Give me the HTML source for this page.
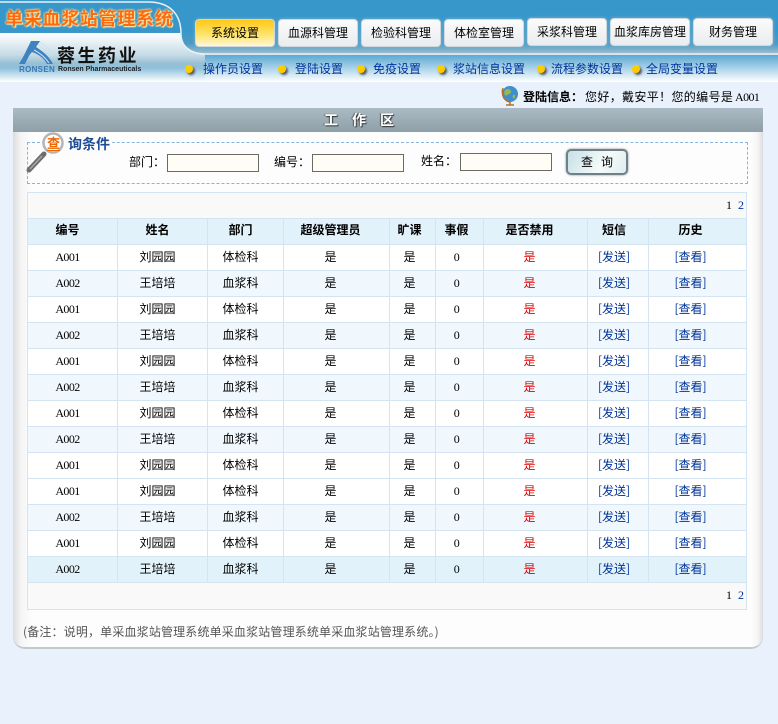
<!DOCTYPE html>
<html lang="zh"><head><meta charset="utf-8"><title>单采血浆站管理系统</title>
<style>
html,body{margin:0;padding:0}
body{width:778px;height:724px;position:relative;overflow:hidden;background:#e9f2fc;font:12px/16px "WenQuanYi Zen Hei","Noto Sans CJK SC",sans-serif;color:#000}
.a{position:absolute;white-space:nowrap}
.tab{position:absolute;width:78px;height:26px;line-height:26px;text-align:center;background:linear-gradient(#fbfbfb,#eaecef);border:1px solid #ced8de;border-radius:4px;box-shadow:0 0 3px #7fb4d0}
.on{background:linear-gradient(#ffc819,#ffe36a 55%,#fff7d6)}
.n{position:absolute;top:61px;color:#003399;white-space:nowrap}
.d{position:absolute;top:65px;width:8px;height:8px;border-radius:50%;background:#ffcc00;box-shadow:2px 2px 2px #556}
.ip{position:absolute;width:90px;height:16px;border:1px solid #6b6b63;background:#fffdf5}
table{position:absolute;left:27px;top:218px;width:719px;border-collapse:collapse;table-layout:fixed}
td,th{padding:0;border:1px solid #d5e4f2;text-align:center;font-size:12px;font-weight:normal}
td{height:23px;padding-bottom:2px;background:#fff}
th{height:21px;padding-bottom:4px;font-weight:bold;background:#e2f2fa}
td:nth-child(1),th:nth-child(1),td:nth-child(2),th:nth-child(2),td:nth-child(3),th:nth-child(3){padding-right:10px}
td:nth-child(4),th:nth-child(4),td:nth-child(7),th:nth-child(7){padding-right:12px}
td:nth-child(5),th:nth-child(5),td:nth-child(6),th:nth-child(6){padding-right:6px}
td:nth-child(8),th:nth-child(8){padding-right:8px}
td:nth-child(9),th:nth-child(9){padding-right:14px}
tr.t td{background:#f0f8fd}
tr.l td{background:#e2f2fa}
.e{font-family:"Liberation Serif",serif;letter-spacing:-.6px}
.r{color:#e00000}.b{color:#003399}
.pg{font-family:"Liberation Serif",serif;word-spacing:3px}
</style></head><body>
<svg class="a" style="left:0;top:0" width="778" height="82">
<defs>
<linearGradient id="g1" x1="0" y1="0" x2="0" y2="1"><stop offset="0" stop-color="#fff"/><stop offset=".45" stop-color="#c5dbe5"/><stop offset=".62" stop-color="#98bfd3"/><stop offset=".72" stop-color="#8fc1dd"/><stop offset="1" stop-color="#fff"/></linearGradient>
<linearGradient id="g2" x1="0" y1="0" x2="0" y2="1"><stop offset="0" stop-color="#3797ca"/><stop offset=".55" stop-color="#4d9bc4"/><stop offset="1" stop-color="#a9c3d0"/></linearGradient>
<linearGradient id="g3" x1="0" y1="0" x2="0" y2="1"><stop offset="0" stop-color="#5aa8d4"/><stop offset="1" stop-color="#fff"/></linearGradient>
</defs>
<rect width="778" height="33" fill="#3797ca"/>
<rect y="30" width="778" height="25" fill="url(#g2)"/>
<rect y="55" width="778" height="27" fill="url(#g3)"/>
<path d="M0 33H181C181 46 190 54 205 54V82H0Z" fill="url(#g1)"/>
<path d="M0 2H148C170 2 181 14 181 34C181 46 190 54 205 54H778" fill="none" stroke="#e6f2f8" stroke-width="1.5"/>
</svg>
<div class="a" style="left:5px;top:7px;font-size:18px;line-height:22px;font-weight:bold;letter-spacing:.7px;color:#ff6a10;text-shadow:0 0 2px #ffe9a0,0 0 2px #ffe9a0,1px 1px 1px #fff0c0">单采血浆站管理系统</div>
<svg class="a" style="left:18px;top:41px" width="35" height="23" viewBox="0 0 35 23"><path d="M1 23C6 15 9 8 13 0H22L18 6C24 10 31 15 35 23H29C26 17 20 13 14 11C11 14 9 19 7 23Z" fill="#3f82c0"/><path d="M20 3C25 7 30 11 34 15M22 1C27 4 31 8 34 11M16 9C22 12 27 16 31 22" stroke="#cfe2ee" fill="none"/></svg>
<div class="a" style="left:19px;top:65px;font:bold 8px/9px 'Liberation Sans',sans-serif;color:#3a78b4;letter-spacing:.3px">RONSEN</div>
<div class="a" style="left:57px;top:45px;font-size:18px;line-height:20px;font-weight:bold;letter-spacing:2.5px;color:#111">蓉生药业</div>
<div class="a" style="left:58px;top:65px;font:bold 7px/9px 'Liberation Sans',sans-serif;color:#222">Ronsen Pharmaceuticals</div>

<div class="tab on" style="left:195px;top:19px">系统设置</div>
<div class="tab" style="left:278px;top:19px">血源科管理</div>
<div class="tab" style="left:361px;top:19px">检验科管理</div>
<div class="tab" style="left:444px;top:19px">体检室管理</div>
<div class="tab" style="left:527px;top:18px">采浆科管理</div>
<div class="tab" style="left:610px;top:18px">血浆库房管理</div>
<div class="tab" style="left:693px;top:18px">财务管理</div>

<i class="d" style="left:185px"></i><span class="n" style="left:203px">操作员设置</span>
<i class="d" style="left:278px"></i><span class="n" style="left:295px">登陆设置</span>
<i class="d" style="left:357px"></i><span class="n" style="left:373px">免疫设置</span>
<i class="d" style="left:437px"></i><span class="n" style="left:453px">浆站信息设置</span>
<i class="d" style="left:537px"></i><span class="n" style="left:551px">流程参数设置</span>
<i class="d" style="left:632px"></i><span class="n" style="left:646px">全局变量设置</span>

<svg class="a" style="left:501px;top:85px" width="18" height="22" viewBox="0 0 18 22"><circle cx="9" cy="9" r="8" fill="#3d8fd0"/><path d="M4 5C7 3 10 4 10 7C9 10 6 9 5 11C3 10 3 7 4 5ZM12 10C14 9 15 11 13 14C12 13 11 12 12 10Z" fill="#9cb84a"/><path d="M2 3C0 9 3 16 9 17V20M5 20H13" stroke="#b5702a" stroke-width="1.5" fill="none"/></svg>
<div class="a" style="left:523px;top:89px"><b>登陆信息：</b></div>
<div class="a" style="left:585px;top:89px;letter-spacing:.35px">您好，戴安平！您的编号是</div>
<div class="a e" style="left:735px;top:89px">A001</div>

<div class="a" style="left:13px;top:108px;width:750px;height:541px;background:linear-gradient(90deg,#dcdcdc,#f5f5f5 8px,#fdfdfd 20px,#fdfdfd 738px,#f4f4f4 745px,#dcdcdc);border-radius:0 0 12px 12px;border-bottom:2px solid #c4c9cd;box-sizing:border-box"></div>
<div class="a" style="left:13px;top:108px;width:750px;height:24px;background:linear-gradient(#aabbc5,#8e9fa7)"></div>
<div class="a" style="left:324px;top:108px;font-size:14px;line-height:24px;font-weight:bold;color:#fff;text-shadow:1px 1px 1px #333,-1px 0 1px #555;letter-spacing:14px">工作区</div>

<div class="a" style="left:27px;top:142px;width:719px;height:40px;border:1px dashed #85b4e0"></div>
<div class="a" style="left:62px;top:134px;width:50px;height:20px;background:#fcfcfc"></div>
<svg class="a" style="left:25px;top:131px" width="44" height="44" viewBox="0 0 44 44"><path d="M4 39L19 23" stroke="#6d6d6d" stroke-width="5" stroke-linecap="round"/><path d="M5 38L17 25" stroke="#a5a5a5" stroke-width="1.5"/><circle cx="28" cy="12" r="9.5" fill="#fff" stroke="#b5b5b5" stroke-width="2.5"/></svg>
<div class="a" style="left:47px;top:136px;font-size:13px;line-height:14px;font-weight:bold;color:#ee6600;border-bottom:1px solid #ee6600">查</div>
<div class="a" style="left:68px;top:136px;font-size:14px;line-height:16px;font-weight:bold;color:#1e4d96">询条件</div>
<div class="a" style="left:129px;top:154px">部门：</div><div class="ip" style="left:167px;top:154px"></div>
<div class="a" style="left:274px;top:154px">编号：</div><div class="ip" style="left:312px;top:154px"></div>
<div class="a" style="left:421px;top:153px">姓名：</div><div class="ip" style="left:460px;top:153px"></div>
<div class="a" style="left:566px;top:149px;width:58px;height:22px;border:2px solid #6f8086;border-radius:5px;background:linear-gradient(120deg,#c6e0e6,#f6fbfb 60%,#dfecee);text-align:center;line-height:22px;box-shadow:0 0 2px #889">查&nbsp;&nbsp;&nbsp;询</div>

<div class="a pg" style="left:27px;top:192px;width:716px;height:26px;background:#f9f9f9;border:1px solid #d5e4f2;border-bottom:0;line-height:25px;text-align:right;padding-right:2px">1 <span class="b">2</span></div>
<table><colgroup><col style="width:90px"><col style="width:90px"><col style="width:76px"><col style="width:106px"><col style="width:46px"><col style="width:48px"><col style="width:104px"><col style="width:61px"><col style="width:98px"></colgroup>
<tbody>
<tr><th>编号</th><th>姓名</th><th>部门</th><th>超级管理员</th><th>旷课</th><th>事假</th><th>是否禁用</th><th>短信</th><th>历史</th></tr>
<tr><td class="e">A001</td><td>刘园园</td><td>体检科</td><td>是</td><td>是</td><td class="e">0</td><td class="r">是</td><td class="b">[发送]</td><td class="b">[查看]</td></tr>
<tr class="t"><td class="e">A002</td><td>王培培</td><td>血浆科</td><td>是</td><td>是</td><td class="e">0</td><td class="r">是</td><td class="b">[发送]</td><td class="b">[查看]</td></tr>
<tr><td class="e">A001</td><td>刘园园</td><td>体检科</td><td>是</td><td>是</td><td class="e">0</td><td class="r">是</td><td class="b">[发送]</td><td class="b">[查看]</td></tr>
<tr class="t"><td class="e">A002</td><td>王培培</td><td>血浆科</td><td>是</td><td>是</td><td class="e">0</td><td class="r">是</td><td class="b">[发送]</td><td class="b">[查看]</td></tr>
<tr><td class="e">A001</td><td>刘园园</td><td>体检科</td><td>是</td><td>是</td><td class="e">0</td><td class="r">是</td><td class="b">[发送]</td><td class="b">[查看]</td></tr>
<tr class="t"><td class="e">A002</td><td>王培培</td><td>血浆科</td><td>是</td><td>是</td><td class="e">0</td><td class="r">是</td><td class="b">[发送]</td><td class="b">[查看]</td></tr>
<tr><td class="e">A001</td><td>刘园园</td><td>体检科</td><td>是</td><td>是</td><td class="e">0</td><td class="r">是</td><td class="b">[发送]</td><td class="b">[查看]</td></tr>
<tr class="t"><td class="e">A002</td><td>王培培</td><td>血浆科</td><td>是</td><td>是</td><td class="e">0</td><td class="r">是</td><td class="b">[发送]</td><td class="b">[查看]</td></tr>
<tr><td class="e">A001</td><td>刘园园</td><td>体检科</td><td>是</td><td>是</td><td class="e">0</td><td class="r">是</td><td class="b">[发送]</td><td class="b">[查看]</td></tr>
<tr><td class="e">A001</td><td>刘园园</td><td>体检科</td><td>是</td><td>是</td><td class="e">0</td><td class="r">是</td><td class="b">[发送]</td><td class="b">[查看]</td></tr>
<tr class="t"><td class="e">A002</td><td>王培培</td><td>血浆科</td><td>是</td><td>是</td><td class="e">0</td><td class="r">是</td><td class="b">[发送]</td><td class="b">[查看]</td></tr>
<tr><td class="e">A001</td><td>刘园园</td><td>体检科</td><td>是</td><td>是</td><td class="e">0</td><td class="r">是</td><td class="b">[发送]</td><td class="b">[查看]</td></tr>
<tr class="l"><td class="e">A002</td><td>王培培</td><td>血浆科</td><td>是</td><td>是</td><td class="e">0</td><td class="r">是</td><td class="b">[发送]</td><td class="b">[查看]</td></tr>
</tbody></table>
<div class="a pg" style="left:27px;top:583px;width:716px;height:26px;background:#f9f9f9;border:1px solid #d5e4f2;border-top:0;line-height:24px;text-align:right;padding-right:2px">1 <span class="b">2</span></div>
<div class="a" style="left:23px;top:624px;color:#555;letter-spacing:.16px">(备注：说明，单采血浆站管理系统单采血浆站管理系统单采血浆站管理系统。)</div>
</body></html>
